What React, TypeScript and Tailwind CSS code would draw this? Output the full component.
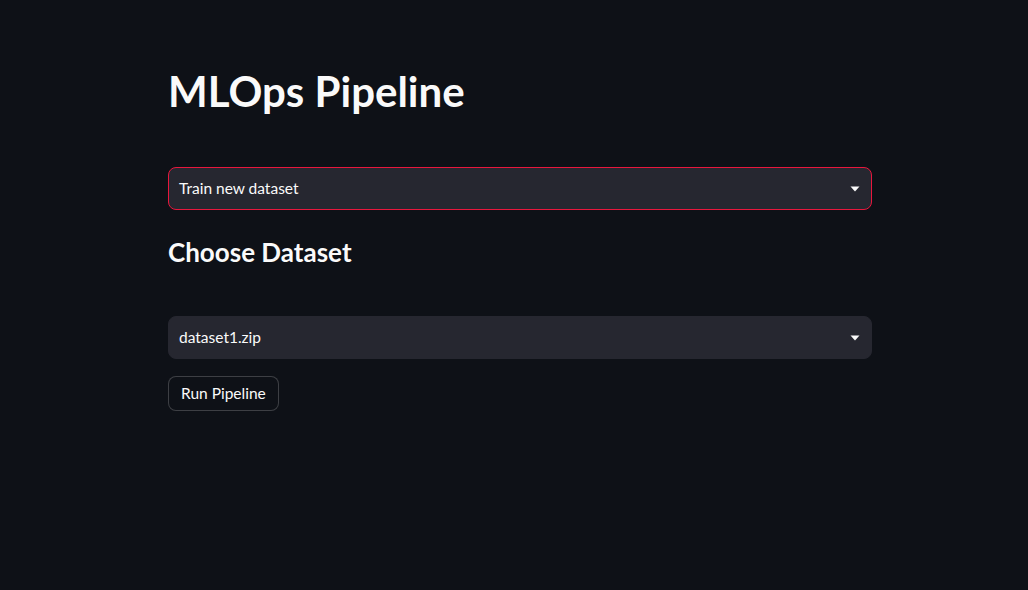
import { useState } from "react";

function Caret() {
  return (
    <svg width="10" height="6" viewBox="0 0 10 6" className="shrink-0">
      <path d="M0.5 0.5 L9.5 0.5 L5 5.5 Z" fill="#fafafa" />
    </svg>
  );
}

function Select({ value, focused }: { value: string; focused?: boolean }) {
  return (
    <div
      className={`flex h-[43px] w-full items-center justify-between rounded-lg border bg-[#262730] pl-[10px] pr-[11px] ${
        focused ? "border-[#e8173d]" : "border-[#262730]"
      }`}
    >
      <span className="text-[15.5px] text-[#fafafa]">{value}</span>
      <Caret />
    </div>
  );
}

export default function App() {
  const [mode] = useState("Train new dataset");
  const [dataset] = useState("dataset1.zip");

  return (
    <div
      className="min-h-[590px] w-full bg-[#0e1117] text-[#fafafa]"
      style={{ fontFamily: "Lato, 'Noto Sans', sans-serif" }}
    >
      <div className="ml-[168px] w-[704px] pt-[61px]">
        <h1 className="text-[42px] font-bold leading-[60px]">MLOps Pipeline</h1>

        <div className="mt-[46px]">
          <Select value={mode} focused />
        </div>

        <h3 className="mt-[24px] text-[26px] font-bold leading-[36px]">Choose Dataset</h3>

        <div className="mt-[46px]">
          <Select value={dataset} />
        </div>

        <button className="mt-[17px] h-[35px] rounded-lg border border-[#fafafa]/20 bg-[#0e1117] px-[12px] text-[15.5px] text-[#fafafa]">
          Run Pipeline
        </button>
      </div>
    </div>
  );
}
